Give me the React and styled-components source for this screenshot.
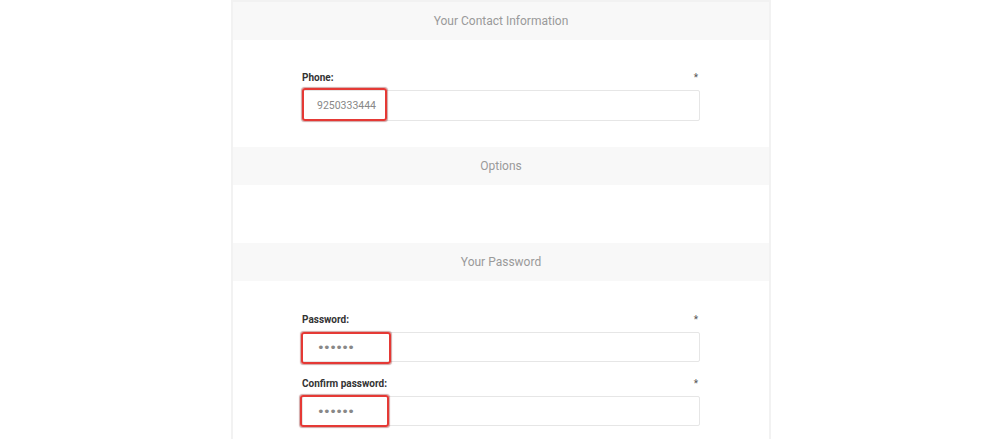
import React from "react";
import styled, { createGlobalStyle } from "styled-components";

const GlobalStyle = createGlobalStyle`
  html, body {
    margin: 0;
    padding: 0;
    background: #ffffff;
    font-family: Roboto, "Liberation Sans", Arial, sans-serif;
  }
`;

const Page = styled.div`
  display: flex;
  justify-content: center;
  padding-left: 2px;
  height: 439px;
  overflow: hidden;
`;

const Panel = styled.div`
  width: 536px;
  border: 2px solid #f2f2f2;
  background: #fff;
  align-self: flex-start;
`;

const SectionHeader = styled.div`
  height: 38px;
  background: #f8f8f8;
  display: flex;
  align-items: center;
  justify-content: center;
  font-size: 12px;
  color: #9a9a9a;
`;

const SectionBody = styled.div`
  display: flex;
  flex-direction: column;
  align-items: center;
  gap: 13px;
  padding: ${(p) => p.pad || "0"};
  min-height: ${(p) => p.minH || "0"};
`;

const Field = styled.div`
  width: 398px;
  display: flex;
  flex-direction: column;
  gap: 5px;
`;

const LabelRow = styled.div`
  display: flex;
  justify-content: space-between;
  align-items: center;
  height: 16px;
  font-size: 10px;
  color: #333;
`;

const Label = styled.label`
  font-weight: 700;
`;

const Required = styled.span`
  color: #555;
  padding-right: 2px;
`;

const InputWrap = styled.div`
  position: relative;
`;

const Input = styled.input`
  box-sizing: border-box;
  width: 100%;
  height: ${(p) => p.h || "31px"};
  border: 1px solid #e6e6e6;
  border-radius: 2px;
  padding: 0 14px;
  font-family: ${(p) =>
    p.type === "password"
      ? `"DejaVu Sans", Roboto, sans-serif`
      : `Roboto, "Liberation Sans", Arial, sans-serif`};
  font-size: ${(p) => (p.type === "password" ? "13px" : "10.5px")};
  color: #888;
  letter-spacing: ${(p) => (p.type === "password" ? "-1.6px" : "0")};
  background: #fff;
  outline: none;
`;

const Highlight = styled.div`
  position: absolute;
  left: ${(p) => p.left}px;
  top: ${(p) => p.top}px;
  width: ${(p) => p.w}px;
  height: ${(p) => p.h}px;
  box-sizing: border-box;
  border: 2px solid #e53935;
  border-radius: 3px;
  box-shadow: 0 0 1px 0.5px rgba(120, 0, 0, 0.35);
  pointer-events: none;
`;

const FormField = ({ label, type, value, h, box }) => (
  <Field>
    <LabelRow>
      <Label>{label}</Label>
      <Required>*</Required>
    </LabelRow>
    <InputWrap>
      <Input type={type} value={value} readOnly h={h} />
      <Highlight left={box[0]} top={box[1]} w={box[2]} h={box[3]} />
    </InputWrap>
  </Field>
);

export default function App() {
  return (
    <>
      <GlobalStyle />
      <Page>
        <Panel>
          <SectionHeader>Your Contact Information</SectionHeader>
          <SectionBody pad="29px 0 26px">
            <FormField
              label="Phone:"
              type="text"
              value="9250333444"
              box={[0, -2, 85, 33]}
            />
          </SectionBody>
          <SectionHeader>Options</SectionHeader>
          <SectionBody minH="58px" />
          <SectionHeader>Your Password</SectionHeader>
          <SectionBody pad="30px 0 26px">
            <FormField
              label="Password:"
              type="password"
              value="123456"
              h="30px"
              box={[-1, 0, 90, 32]}
            />
            <FormField
              label="Confirm password:"
              type="password"
              value="123456"
              h="30px"
              box={[-2, -1, 89, 32]}
            />
          </SectionBody>
        </Panel>
      </Page>
    </>
  );
}
